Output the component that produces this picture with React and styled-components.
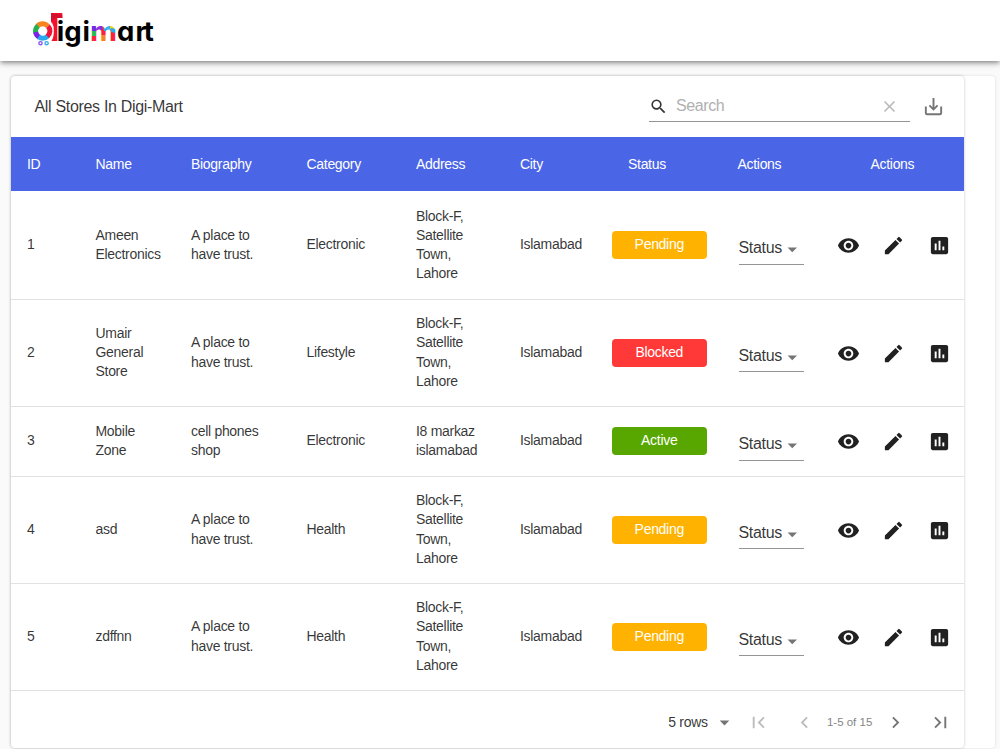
import React from "react";
import styled, { createGlobalStyle } from "styled-components";
import {
  MdArrowDropDown,
  MdAssessment,
  MdChevronLeft,
  MdChevronRight,
  MdClear,
  MdEdit,
  MdFirstPage,
  MdLastPage,
  MdRemoveRedEye,
  MdSaveAlt,
  MdSearch,
} from "react-icons/md";

const GlobalStyle = createGlobalStyle`
  * {
    box-sizing: border-box;
  }

  body {
    margin: 0;
    height: 749px;
    overflow: hidden;
    background: #fafafa;
    color: rgba(0, 0, 0, 0.8);
    font-family: "Liberation Sans", Arial, sans-serif;
    font-size: 14px;
    letter-spacing: -0.3px;
  }
`;

const AppBar = styled.header`
  position: relative;
  height: 61px;
  padding: 9px 0 0 30px;
  background: white;
  box-shadow: 0 2px 4px -1px rgba(0, 0, 0, 0.3), 0 3px 5px rgba(0, 0, 0, 0.16),
    0 1px 9px rgba(0, 0, 0, 0.12);
`;

const Page = styled.main`
  padding: 15px 5px 0 11px;
`;

const Paper = styled.div`
  height: 672px;
  background: white;
  border-radius: 4px;
  box-shadow: 0 0 3px rgba(0, 0, 0, 0.12);
`;

const Card = styled.section`
  width: 953px;
  height: 672px;
  background: white;
  border-radius: 4px;
  box-shadow: 0 0 3px rgba(0, 0, 0, 0.24);
`;

const Toolbar = styled.div`
  display: flex;
  align-items: center;
  height: 61px;
  padding: 0 19px 0 23.5px;
`;

const Title = styled.h6`
  margin: 0 auto 0 0;
  font-size: 16px;
  font-weight: 400;
  letter-spacing: -0.32px;
`;

const SearchField = styled.div`
  display: flex;
  align-items: center;
  width: 261px;
  height: 31px;
  margin-right: 12px;
  padding-right: 11px;
  border-bottom: 1px solid #949494;

  svg:last-child {
    color: #b8b8b8;
  }
`;

const SearchInput = styled.input`
  flex: 1;
  min-width: 0;
  margin-left: 8px;
  padding: 0;
  border: 0;
  outline: 0;
  background: none;
  font: inherit;
  font-size: 16px;
  letter-spacing: -0.4px;

  &::placeholder {
    color: #b0b0b0;
    opacity: 1;
  }
`;

const Table = styled.table`
  width: 100%;
  table-layout: fixed;
  border-collapse: separate;
  border-spacing: 0;
`;

const Col = styled.col`
  width: ${(props) => props.$width}px;
`;

const HeadCell = styled.th`
  height: 54px;
  padding: 0 0 0 ${(props) => props.$indent || 16}px;
  background: #4a65e6;
  color: white;
  font-weight: 400;
  text-align: left;
`;

const Cell = styled.td`
  padding: 0 0 1px 16px;
  border-bottom: 1px solid #e2e2e2;
  line-height: 19.2px;
  white-space: pre-line;
`;

const Row = styled.tr`
  height: ${(props) => props.$height}px;

  &:first-child ${Cell} {
    padding-bottom: 0;
  }
`;

const statusColors = {
  Pending: "#ffb300",
  Blocked: "#ff3838",
  Active: "#58a700",
};

const Badge = styled.div`
  width: 95.5px;
  height: 28px;
  margin-left: -0.5px;
  border-radius: 4px;
  background: ${(props) => statusColors[props.$status]};
  color: white;
  line-height: 27px;
  text-align: center;
`;

const Select = styled.div`
  display: flex;
  align-items: center;
  width: 65px;
  height: 32px;
  margin-top: 7px;
  border-bottom: 1px solid #949494;
  font-size: 16px;
  letter-spacing: -0.32px;

  svg {
    margin: 3px 0 0 -1px;
    color: #757575;
  }
`;

const IconRow = styled.div`
  display: flex;
  gap: 22.7px;
  padding: 1px 0 0 1.5px;
  color: #212121;
`;

const Footer = styled.footer`
  display: flex;
  align-items: center;
  justify-content: flex-end;
  height: 56px;
  padding: 5px 0.5px 0 0;
  color: #757575;
`;

const PageSize = styled.div`
  display: flex;
  align-items: center;
  color: rgba(0, 0, 0, 0.8);

  svg {
    margin: 2px 0 0 5px;
    color: #757575;
  }
`;

const PageButton = styled.button`
  display: flex;
  margin: 2px 0 0;
  padding: 0 11.3px;
  border: 0;
  background: none;
  color: #757575;

  &:disabled {
    color: #bdbdbd;
  }
`;

const PageRange = styled.span`
  padding-top: 1px;
  color: #858585;
  font-size: 11.5px;
  letter-spacing: 0;
  white-space: nowrap;
`;

const Logo = () => (
  <svg width="128" height="42" viewBox="30 9 128 42" role="img">
    <defs>
      <pattern id="m" x="90" y="20" width="30" height="24" patternUnits="userSpaceOnUse">
        <rect width="30" height="24" fill="#fb233a" />
        <rect width="6" height="12" fill="#6a2ee0" />
        <rect y="11" width="6" height="5" fill="#1fc04e" />
        <rect x="6" width="6" height="10" fill="#8c2be0" />
        <rect x="11" y="15" width="6" height="9" fill="#f5841f" />
        <path d="M12 0H18V11H14Z" fill="#2aa9ee" />
        <path d="M17 0H22V10H17Z" fill="#35b3e8" />
        <path d="M20 0H30V9L24 12L20 8Z" fill="#f4d51c" />
        <path d="M21 8L26 9V13L21 12Z" fill="#2aa9ee" />
      </pattern>
    </defs>
    <g fill="none" strokeWidth="5">
      <path d="M37.4 26.2A7 7 0 0 1 48 26.4" stroke="#f5841f" />
      <path d="M35.8 33A7 7 0 0 1 38 25.8" stroke="#22b14c" />
      <path d="M39.2 37.2A7 7 0 0 1 35.7 32.2" stroke="#7a22e8" />
      <path d="M47.8 36A7 7 0 0 1 38.6 36.8" stroke="#2aa9ee" />
      <path d="M48 26.2A7 7 0 0 1 47.4 36.4" stroke="#ef1437" />
    </g>
    <path d="M51 13H62.3V18H57.3V41H51.5L53.2 37V26L51 22Z" fill="#f70f2f" />
    <path d="M51 13V21L56.5 18H62.3V15Z" fill="#d4102d" />
    <path d="M51.6 22.5Q55.6 31 51.4 40" fill="none" stroke="#fff" strokeWidth="0.8" />
    <circle cx="40.5" cy="43.2" r="1.6" fill="none" stroke="#8b52ef" strokeWidth="1.4" />
    <circle cx="46.6" cy="43.2" r="1.6" fill="none" stroke="#35a9ef" strokeWidth="1.4" />
    <g
      fontFamily="Inter, 'Liberation Sans', sans-serif"
      fontSize="27.5"
      fontWeight="700"
      letterSpacing="0"
      style={{ fontFeatureSettings: '"cv11"' }}
    >
      <text x="56.8 64.3 82.4" y="40.7">
        igi
      </text>
      <text x="90" y="40.7" textLength="27" lengthAdjust="spacingAndGlyphs" fill="url(#m)">
        m
      </text>
      <text x="117 135.4 143.8" y="40.7">
        art
      </text>
    </g>
  </svg>
);

const columns = [
  { title: "ID", width: 68.5 },
  { title: "Name", width: 95.5 },
  { title: "Biography", width: 115.5 },
  { title: "Category", width: 109.5 },
  { title: "Address", width: 104 },
  { title: "City", width: 92 },
  { title: "Status", width: 126.5, indent: 32 },
  { title: "Actions", width: 96.5, indent: 15 },
  { title: "Actions", width: 145, indent: 51.5 },
];

const townAddress = "Block-F,\nSatellite\nTown,\nLahore";

const stores = [
  {
    id: 1,
    name: "Ameen\nElectronics",
    bio: "A place to\nhave trust.",
    category: "Electronic",
    address: townAddress,
    status: "Pending",
    height: 109,
  },
  {
    id: 2,
    name: "Umair\nGeneral\nStore",
    bio: "A place to\nhave trust.",
    category: "Lifestyle",
    address: townAddress,
    status: "Blocked",
    height: 107,
  },
  {
    id: 3,
    name: "Mobile\nZone",
    bio: "cell phones\nshop",
    category: "Electronic",
    address: "I8 markaz\nislamabad",
    status: "Active",
    height: 70,
  },
  {
    id: 4,
    name: "asd",
    bio: "A place to\nhave trust.",
    category: "Health",
    address: townAddress,
    status: "Pending",
    height: 107,
  },
  {
    id: 5,
    name: "zdffnn",
    bio: "A place to\nhave trust.",
    category: "Health",
    address: townAddress,
    status: "Pending",
    height: 107,
  },
];

const StoreRow = ({ store }) => (
  <Row $height={store.height}>
    <Cell>{store.id}</Cell>
    <Cell>{store.name}</Cell>
    <Cell>{store.bio}</Cell>
    <Cell>{store.category}</Cell>
    <Cell>{store.address}</Cell>
    <Cell>Islamabad</Cell>
    <Cell>
      <Badge $status={store.status}>{store.status}</Badge>
    </Cell>
    <Cell>
      <Select>
        Status
        <MdArrowDropDown size={23} />
      </Select>
    </Cell>
    <Cell>
      <IconRow>
        <MdRemoveRedEye size={23} />
        <MdEdit size={23} />
        <MdAssessment size={23} />
      </IconRow>
    </Cell>
  </Row>
);

const App = () => (
  <>
    <GlobalStyle />
    <AppBar>
      <Logo />
    </AppBar>
    <Page>
      <Paper>
        <Card>
          <Toolbar>
            <Title>All Stores In Digi-Mart</Title>
            <SearchField>
              <MdSearch size={19} />
              <SearchInput placeholder="Search" />
              <MdClear size={19} />
            </SearchField>
            <MdSaveAlt size={23} color="#757575" />
          </Toolbar>
          <Table>
            <colgroup>
              {columns.map((column, i) => (
                <Col key={i} $width={column.width} />
              ))}
            </colgroup>
            <thead>
              <tr>
                {columns.map((column, i) => (
                  <HeadCell key={i} $indent={column.indent}>
                    {column.title}
                  </HeadCell>
                ))}
              </tr>
            </thead>
            <tbody>
              {stores.map((store) => (
                <StoreRow key={store.id} store={store} />
              ))}
            </tbody>
          </Table>
          <Footer>
            <PageSize>
              5 rows
              <MdArrowDropDown size={23} />
            </PageSize>
            <PageButton disabled>
              <MdFirstPage size={23} />
            </PageButton>
            <PageButton disabled>
              <MdChevronLeft size={23} />
            </PageButton>
            <PageRange>1-5 of 15</PageRange>
            <PageButton>
              <MdChevronRight size={23} />
            </PageButton>
            <PageButton>
              <MdLastPage size={23} />
            </PageButton>
          </Footer>
        </Card>
      </Paper>
    </Page>
  </>
);

export default App;
